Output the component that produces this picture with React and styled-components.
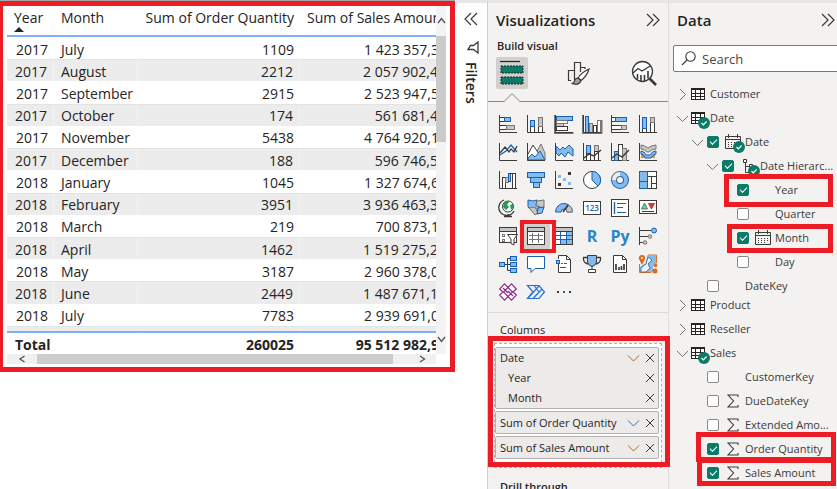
import React from "react";
import styled, { createGlobalStyle, css } from "styled-components";

const RED = "#ed1c24";
const INK = "#252423";
const PANE = "#f3f2f1";
const GREEN = "#0b7a66";
const D = "#3b3a39";
const B = "#1b5fb0";
const LB = "#83bbec";
const G = "#797775";
const LG = "#c8c6c4";

const GlobalStyle = createGlobalStyle`
  *, *::before, *::after { box-sizing: border-box; }
  body { margin: 0; background: #fff; color: ${INK}; font-family: "Open Sans", "Noto Sans", sans-serif; }
  button, input { font: inherit; color: inherit; }
  button { border: 0; padding: 0; background: none; cursor: pointer; }
  ul { list-style: none; margin: 0; padding: 0; }
  h2, h3 { margin: 0; font-weight: 600; }
  svg { display: block; flex: none; }
`;

/* ---------- shell ---------- */

const Page = styled.main`
  display: grid;
  grid-template-columns: minmax(0, 1fr) 32px 182px 168px;
  height: 100vh;
  overflow: hidden;
`;

const Canvas = styled.section`
  border-top: 1px solid #a6a6a6;
`;

const sidePane = css`
  border-top: 3px solid #e6e6e6;
`;

const FiltersPane = styled.aside`
  ${sidePane}
  display: flex;
  flex-direction: column;
  align-items: center;
  padding-top: 9px;
`;

const VizPane = styled.aside`
  ${sidePane}
  position: relative;
  z-index: 1;
  background: ${PANE};
  border-left: 1px solid #d2d0ce;
  border-right: 1px solid #dddbd9;
`;

const DataPane = styled.aside`
  ${sidePane}
  background: ${PANE};
  overflow: hidden;
`;

const Mark = styled.span`
  position: absolute;
  inset: ${(p) => p.$inset};
  border: ${(p) => p.$width || 5}px solid ${RED};
  pointer-events: none;
  z-index: 2;
`;

const PaneHeader = styled.header`
  display: flex;
  align-items: center;
  justify-content: space-between;
  height: 34px;
  padding: 0 8px;
  margin-right: ${(p) => (p.$bleed ? "-6px" : "0")};
`;

const PaneTitle = styled.h2`
  font-size: 15px;
  line-height: 20px;
`;

/* ---------- table visual ---------- */

const Visual = styled.div`
  display: grid;
  grid-template-columns: minmax(0, 1fr) 10px;
  border: 5px solid ${RED};
  border-left-width: 3px;
  padding: 0 4px 3px;
`;

const TableViewport = styled.div`
  overflow: hidden;
`;

const DataTable = styled.table`
  width: 438px;
  height: 348px;
  table-layout: fixed;
  border-spacing: 0;
  font-size: 14px;
  line-height: 19px;
  white-space: nowrap;
`;

const Col = styled.col`
  width: ${(p) => p.$w}px;
`;

const HeadCell = styled.th`
  height: 31px;
  padding: 2px 6px 0 7px;
  vertical-align: top;
  font-weight: 400;
  text-align: ${(p) => (p.$end ? "right" : "left")};
  border-bottom: 2px solid #7fb0f5;
`;

const SortMark = styled.svg`
  width: 10px;
  height: 5px;
`;

const Cell = styled.td`
  padding: 2px 6px 0 7px;
  text-align: ${(p) => (p.$end ? "right" : "left")};
`;

const BodyRow = styled.tr`
  &:nth-child(even) > td {
    padding-top: 1px;
    background: #ececec;
    border-top: 1px solid #e3e3e3;
    border-right: 1px solid #f3f3f3;
  }
`;

const PeekCell = styled.td`
  height: 5px;
  padding: 0;
`;

const TotalCell = styled.td`
  height: 23px;
  padding: 2px 6px 0 8px;
  font-weight: 700;
  text-align: ${(p) => (p.$end ? "right" : "left")};
  border-top: 2px solid #7fb0f5;
`;

const VTrack = styled.div`
  display: flex;
  flex-direction: column;
  align-items: center;
  background: #f3f3f3;
`;

const VThumb = styled.div`
  width: 10px;
  height: 106px;
  margin-bottom: auto;
  background: #cbcbcb;
`;

const HTrack = styled.div`
  display: flex;
  height: 10px;
  background: #f0f0f0;
`;

const HThumb = styled.div`
  flex: 1;
  margin-right: 15px;
  background: #cdcdcd;
`;

const ScrollButton = styled.button`
  display: grid;
  place-items: center;
  width: ${(p) => p.$w}px;
  height: ${(p) => p.$h}px;
`;

const rows = [
  ["2017", "July", "1109", "1 423 357,3"],
  ["2017", "August", "2212", "2 057 902,4"],
  ["2017", "September", "2915", "2 523 947,5"],
  ["2017", "October", "174", "561 681,4"],
  ["2017", "November", "5438", "4 764 920,1"],
  ["2017", "December", "188", "596 746,5"],
  ["2018", "January", "1045", "1 327 674,6"],
  ["2018", "February", "3951", "3 936 463,3"],
  ["2018", "March", "219", "700 873,1"],
  ["2018", "April", "1462", "1 519 275,2"],
  ["2018", "May", "3187", "2 960 378,0"],
  ["2018", "June", "2449", "1 487 671,1"],
  ["2018", "July", "7783", "2 939 691,0"],
];

const arrows = {
  up: "M1 6 L4.5 1.5 L8 6",
  down: "M1 2 L4.5 6.5 L8 2",
  left: "M6.5 1 L2 4 L6.5 7",
  right: "M2 1 L6.5 4 L2 7",
};

function Arrow({ dir }) {
  return (
    <svg width="9" height="8" viewBox="0 0 9 8" fill="none" stroke="#505050" strokeWidth="1.3">
      <path d={arrows[dir]} />
    </svg>
  );
}

function SalesTable() {
  return (
    <Visual>
      <TableViewport>
        <DataTable>
          <colgroup>
            <Col $w={47} />
            <Col $w={84} />
            <Col $w={162} />
            <Col $w={145} />
          </colgroup>
          <thead>
            <tr>
              <HeadCell scope="col">
                Year
                <SortMark viewBox="0 0 10 5" aria-hidden="true">
                  <path d="M0 5 L5 0 L10 5Z" fill={INK} />
                </SortMark>
              </HeadCell>
              <HeadCell scope="col">Month</HeadCell>
              <HeadCell scope="col" $end>Sum of Order Quantity</HeadCell>
              <HeadCell scope="col">Sum of Sales Amount</HeadCell>
            </tr>
          </thead>
          <tbody>
            {rows.map((r, i) => (
              <BodyRow key={i}>
                <Cell $end>{r[0]}</Cell>
                <Cell>{r[1]}</Cell>
                <Cell $end>{r[2]}</Cell>
                <Cell $end>{r[3]}</Cell>
              </BodyRow>
            ))}
            <BodyRow aria-hidden="true">
              <PeekCell />
              <PeekCell />
              <PeekCell />
              <PeekCell />
            </BodyRow>
          </tbody>
          <tfoot>
            <tr>
              <TotalCell colSpan={2}>Total</TotalCell>
              <TotalCell $end>260025</TotalCell>
              <TotalCell $end>95 512 982,9</TotalCell>
            </tr>
          </tfoot>
        </DataTable>
      </TableViewport>
      <VTrack>
        <ScrollButton $w={10} $h={30} aria-label="Scroll up"><Arrow dir="up" /></ScrollButton>
        <VThumb />
        <ScrollButton $w={10} $h={30} aria-label="Scroll down"><Arrow dir="down" /></ScrollButton>
      </VTrack>
      <HTrack>
        <ScrollButton $w={30} $h={10} aria-label="Scroll left"><Arrow dir="left" /></ScrollButton>
        <HThumb />
        <ScrollButton $w={28} $h={10} aria-label="Scroll right"><Arrow dir="right" /></ScrollButton>
      </HTrack>
    </Visual>
  );
}

/* ---------- shared glyphs ---------- */

function DoubleChevron({ left }) {
  return (
    <svg width="14" height="14" viewBox="0 0 14 14" fill="none" stroke={D} strokeWidth="1.2">
      {left ? (
        <path d="M7 1 L1 7 L7 13 M13 1 L7 7 L13 13" />
      ) : (
        <path d="M1 1 L7 7 L1 13 M7 1 L13 7 L7 13" />
      )}
    </svg>
  );
}

const FiltersTitle = styled.h2`
  writing-mode: vertical-rl;
  margin-top: 8px;
  font-size: 14px;
  line-height: 20px;
`;

const FunnelButton = styled.button`
  margin: 15px 0 0 4px;
`;

/* ---------- visual gallery icons (18 x 18) ---------- */

const Axis = () => <path d="M.5 0 V17.5 H18" stroke={D} fill="none" />;
const R = ({ x, y, w, h, f = "#fff", s = D }) => (
  <rect x={x + 0.5} y={y + 0.5} width={w - 1} height={h - 1} fill={f} stroke={s} />
);

const gallery = [
  ["Stacked bar chart", <><Axis /><R x={0} y={2} w={6} h={5} /><R x={5} y={2} w={7} h={5} f={LB} s={B} /><R x={0} y={10} w={8} h={5} /><R x={7} y={10} w={9} h={5} f={LG} s={G} /></>],
  ["Stacked column chart", <><Axis /><R x={3} y={11} w={5} h={7} /><R x={3} y={5} w={5} h={7} f={LB} s={B} /><R x={11} y={11} w={5} h={7} /><R x={11} y={2} w={5} h={10} f={LG} s={G} /></>],
  ["Clustered bar chart", <><path d="M0 0 V18 H18.5" stroke={G} strokeWidth="2" fill="none" /><R x={1} y={1} w={17} h={5} f={LB} s={B} /><R x={1} y={5} w={12} h={4} s={G} /><R x={1} y={8} w={8} h={4} f={LG} s={G} /><R x={1} y={11} w={12} h={5} /><Axis /></>],
  ["Clustered column chart", <><path d="M0 0 V18 H18.5 V5" stroke={G} strokeWidth="2" fill="none" /><R x={2} y={1} w={4} h={17} f={LB} s={B} /><R x={6} y={8} w={4} h={10} f={LG} s={G} /><R x={10} y={10} w={4} h={8} /><R x={14} y={5} w={4} h={13} s={G} /><Axis /></>],
  ["100% stacked bar chart", <><Axis /><R x={0} y={2} w={6} h={5} /><R x={4} y={2} w={12} h={5} f={LB} s={B} /><R x={0} y={10} w={11} h={5} /><R x={10} y={10} w={6} h={5} f={LG} s={G} /></>],
  ["100% stacked column chart", <><Axis /><R x={3} y={12} w={5} h={6} /><R x={3} y={2} w={5} h={12} f={LB} s={B} /><R x={11} y={7} w={5} h={11} /><R x={11} y={2} w={5} h={6} f={LG} s={G} /></>],

  ["Line chart", <><Axis /><path d="M1 12 L4 10 L7 8 L12 2 L18 9" stroke={B} fill="none" strokeWidth="1.3" /><path d="M1 10 L6 4 L10 9 L12 6 L15 9 L18 3" stroke={D} fill="none" strokeWidth="1.3" /></>],
  ["Area chart", <><path d="M10 8 L14 1 L18 10 V17 H8Z" fill={LG} stroke={G} /><path d="M.5 12 L6 2 L12 11 L8 17 H.5Z" fill="#fff" stroke={D} /><path d="M1 15 L5 11 L8 14 L13 8 L18 17 H1Z" fill={LB} stroke={B} /><Axis /></>],
  ["Stacked area chart", <><path d="M1 3 L5 7 L8 4 L10 6 L14 2 L18 6 V13 L13 9 L10 14 L6 10 L4 13 L1 10Z" fill={LB} stroke={B} /><Axis /></>],
  ["Line and stacked column chart", <><Axis /><R x={3} y={2} w={5} h={9} f={LB} s={B} /><R x={3} y={10} w={5} h={8} /><R x={11} y={2} w={5} h={7} f={LG} s={G} /><R x={11} y={8} w={5} h={10} /><path d="M1 15 L6 11 L11 13 L18 7" stroke={D} fill="none" strokeWidth="1.4" /></>],
  ["Line and clustered column chart", <><Axis /><R x={3} y={8} w={5} h={10} f={LB} s={B} /><R x={7} y={1} w={5} h={17} /><R x={11} y={5} w={5} h={13} f={LG} s={G} /><path d="M1 15 L6 11 L11 14 L18 7" stroke={D} fill="none" strokeWidth="1.4" /></>],
  ["Ribbon chart", <><rect x="2" y="11" width="4" height="4" fill="#f08a3c" /><rect x="12" y="11" width="4" height="4" fill="#f08a3c" /><path d="M2 2 Q5 2 9 5 Q13 2 17 2 V6 Q13 6 10 9 H8 Q5 6 2 6Z" fill={LG} stroke={G} /><path d="M2 8 Q5 8 7 12 H11 Q13 8 17 8 V11 Q14 11 12 15 H6 Q5 11 2 11Z" fill={LB} stroke={B} /><Axis /></>],

  ["Waterfall chart", <><Axis /><R x={3} y={6} w={4} h={12} /><R x={6} y={6} w={4} h={6} f={LG} s={G} /><R x={9} y={2} w={3} h={9} f={LB} s={B} /><R x={13} y={2} w={4} h={16} /><path d="M10 2.5 H14" stroke={D} /></>],
  ["Funnel chart", <><R x={0} y={1} w={18} h={6} f={LB} s={B} /><R x={3} y={6} w={12} h={6} f={LB} s={B} /><R x={6} y={11} w={7} h={6} f={LB} s={B} /></>],
  ["Scatter chart", <><Axis /><rect x="13" y="1" width="3" height="3" fill={D} /><rect x="3" y="4" width="3" height="3" fill={LB} /><rect x="8" y="7" width="3" height="3" fill={LB} /><rect x="13" y="11" width="3" height="3" fill={LB} /><rect x="3" y="12" width="3" height="3" fill={D} /></>],
  ["Pie chart", <><circle cx="9" cy="9" r="8.5" fill="#fff" stroke={D} /><path d="M9 .5 A8.5 8.5 0 0 1 15 15 L9 9Z" fill={LB} stroke={B} /></>],
  ["Donut chart", <><circle cx="9" cy="9" r="6" fill="none" stroke={B} strokeWidth="6" /><circle cx="9" cy="9" r="6" fill="none" stroke={LB} strokeWidth="4" /><path d="M9 3 A6 6 0 0 0 3 9" fill="none" stroke={G} strokeWidth="6" /><path d="M9 3 A6 6 0 0 0 3 9" fill="none" stroke="#eee" strokeWidth="4" /></>],
  ["Treemap", <><R x={8} y={0} w={10} h={6} /><R x={8} y={5} w={5} h={13} /><R x={12} y={5} w={6} h={8} /><R x={12} y={12} w={6} h={6} /><R x={0} y={0} w={9} h={11} f={LB} s={B} /><R x={0} y={10} w={9} h={8} f={LB} s={B} /></>],

  ["Map", <><circle cx="9" cy="7.5" r="5.5" fill="#fff" stroke={D} /><path d="M5 4 Q8 1 10 3 L8 6 L10 8 L7 11 L4 8Z M11 6 L14 5 V9 L12 11Z" fill="#1f9d55" /><path d="M5 1 A8 8 0 1 0 15 12 M9 15 V17 M5 17.5 H13" fill="none" stroke={D} strokeWidth="1.3" /></>],
  ["Filled map", <><path d="M1 1 L6 2 L10 1 L9 6 L12 8 L9 14 L5 12 L1 8Z" fill={LB} stroke={B} /><path d="M10 2 L17 1 L17 8 L14 9 L12 7 L9 7Z M2 9 L8 8 L11 14 L8 16Z" fill={LG} stroke={G} /><path d="M11 9 L17 8 L15 14 L10 15Z" fill={LB} stroke={B} /></>],
  ["Gauge", <><path d="M.5 13 A8.5 8.5 0 0 1 17.5 13 H12 A3 3 0 0 0 6 13Z" fill={LB} stroke={B} /><path d="M14 6 A8.5 8.5 0 0 1 17.5 13 H12 L11 10Z" fill={LG} stroke={G} /><path d="M8 13 L13 6" stroke={D} strokeWidth="1.5" /></>],
  ["Card", <><R x={0} y={2} w={18} h={14} /><text x="9" y="12" fontSize="8" fontWeight="600" textAnchor="middle" fill={B}>123</text></>],
  ["Multi-row card", <><R x={0} y={0} w={18} h={18} /><path d="M3.5 3 V15" stroke={B} strokeWidth="1.4" /><path d="M6 4.5 H15 M6 8.5 H12 M6 13.5 H15" stroke={B} /></>],
  ["KPI", <><R x={0} y={1} w={18} h={14} /><path d="M2.5 10 L5.5 4 L8.5 10Z" fill="#7cc9a0" stroke="#1b7a47" strokeWidth=".8" /><path d="M9.5 4.5 L12.5 10 L15.5 4.5Z" fill="#e8353b" stroke="#b51c22" strokeWidth=".8" /><path d="M3 12.5 H15" stroke={D} /></>],

  ["Slicer", <><R x={0} y={0} w={18} h={16} /><rect x="1" y="1" width="16" height="3" fill={LG} /><path d="M.5 4.5 H17.5" stroke={D} /><R x={3} y={7} w={3} h={3} s={G} /><R x={3} y={12} w={3} h={3} s={G} /><path d="M8.5 7.5 H18.5 L15 12 V18 L12 16.5 V12Z" fill="#fff" stroke={D} /></>],
  ["Table", <><R x={0} y={0} w={18} h={18} /><rect x="1" y="1" width="16" height="3" fill={LG} /><path d="M2 8.5 H16 M2 12.5 H16 M5.5 6 V16 M11.5 6 V16" stroke={G} /><path d="M0 4.5 H18" stroke={D} /></>],
  ["Matrix", <><R x={0} y={0} w={18} h={18} /><rect x="1" y="1" width="16" height="3" fill={LG} /><rect x="12" y="5" width="5" height="12" fill={LB} /><rect x="6" y="13" width="6" height="4" fill={LB} /><path d="M1 8.5 H17 M1 12.5 H17 M5.5 5 V17 M11.5 5 V17" stroke={B} /><path d="M0 4.5 H18 M.5 4 V17" stroke={D} /></>],
  ["R script visual", <text x="9" y="15" fontSize="16" fontWeight="700" textAnchor="middle" fill="#2b84c6">R</text>],
  ["Python visual", <text x="9" y="15" fontSize="16" fontWeight="700" textAnchor="middle" fill="#2b84c6">Py</text>],
  ["Key influencers", <><path d="M.5 0 V18 M1 3.5 H12 M1 9.5 H9 M1 15.5 H4" stroke={D} /><circle cx="15" cy="3.5" r="2.5" fill={LB} stroke={B} /><circle cx="11" cy="9.5" r="1.8" fill={LG} stroke={G} /><circle cx="6" cy="15.5" r="1.8" fill={LG} stroke={G} /></>],

  ["Decomposition tree", <><path d="M5 9.5 H12 M8.5 3.5 V15.5 M8.5 3.5 H12 M8.5 15.5 H12" stroke={D} fill="none" /><R x={0} y={7} w={6} h={5} f={LB} s={B} /><R x={11} y={1} w={7} h={5} f={LB} s={B} /><R x={11} y={7} w={7} h={5} f={LB} s={B} /><R x={11} y={13} w={7} h={5} f={LB} s={B} /></>],
  ["Q&A", <path d="M.5 1.5 H17.5 V13.5 H8 L4 17.5 V13.5 H.5Z" fill="#fff" stroke={B} />],
  ["Smart narrative", <><path d="M3.5 4 V.5 H11.5 L15.5 4.5 V17.5 H3.5 V9" fill="#fff" stroke={D} /><path d="M11.5 .5 V4.5 H15.5" fill="none" stroke={D} /><R x={1} y={5} w={4} h={4} f={LB} s={B} /><path d="M6 8.5 H8 M9 8.5 H12 M5 12.5 H11" stroke={B} strokeWidth="1.2" /></>],
  ["Metrics", <><path d="M4 2.5 H.5 Q0 8 5 9 M14 2.5 H17.5 Q18 8 13 9" fill="none" stroke={D} strokeWidth="1.3" /><path d="M4.5 .5 H13.5 V7 Q13 10.5 9 11.5 Q5 10.5 4.5 7Z" fill={LB} stroke={D} /><path d="M9 11 V14 M5.5 17.5 V14.5 H12.5 V17.5Z" fill="#fff" stroke={D} /></>],
  ["Paginated report", <><path d="M2.5 .5 H11.5 L15.5 4.5 V17.5 H2.5Z" fill="#fff" stroke={D} /><path d="M11.5 .5 V4.5 H15.5" fill="none" stroke={D} /><path d="M5 15 V9 M8 15 V12 M10.5 15 V11 M13 15 V9" stroke={D} strokeWidth="1.7" /></>],
  ["ArcGIS Maps", <><path d="M8 .5 H17.5 V9 L14 11 L15 17.5 H.5 V12 L7 8Z" fill={LB} /><path d="M9 0 H17.5 V8 M.5 9 V17.5 H12" fill="none" stroke="#d9702b" /><path d="M9 2 L13 5 L9 9 L11 13 L7 17 H2 V13 L7 9Z" fill="#f3f2f1" stroke={B} strokeWidth=".8" /><path d="M3 0 A3 3 0 0 1 6 4 L3 10 L0 4 A3 3 0 0 1 3 0Z" fill="#e0671c" /><circle cx="3" cy="3" r="1" fill="#fff" /><circle cx="16.5" cy="10.5" r="1.8" fill="#e0671c" /><circle cx="16" cy="16" r="2.5" fill="#e0671c" /></>],

  ["Power Apps", <><path d="M5.5 .8 L9 4.5 L12.5 .8 L17.3 6 L14 9 L17.3 12 L12.5 17.2 L9 13.5 L5.5 17.2 L.7 12 L4 9 L.7 6Z" fill="#fff" stroke="#8e2a8b" strokeWidth="1.2" /><path d="M9 4.5 L13.5 9 L9 13.5 L4.5 9Z M4 5 L9 10 M14 13 L9 8" fill="none" stroke="#8e2a8b" strokeWidth="1.2" /></>],
  ["Power Automate", <><path d="M.5 2.5 H12 L17.5 9 L12 15.5 H.5 L6 9Z" fill="#e8f1fb" stroke="#2b6fd0" strokeWidth="1.2" /><path d="M7 2.5 L12 9 M1 15 L12 3 M6 15.5 L15 6" fill="none" stroke="#2b6fd0" strokeWidth="1.2" /></>],
  ["More visuals", <><rect x="2" y="8" width="2" height="2" fill={D} /><rect x="8" y="8" width="2" height="2" fill={B} /><rect x="14" y="8" width="2" height="2" fill={D} /></>],
];

const SubTitle = styled.h3`
  padding: 0 9px;
  font-size: 11px;
  line-height: 18px;
`;

const Tabs = styled.div`
  display: flex;
  justify-content: space-between;
  margin: 2px 8px 0;
`;

const Tab = styled.button`
  display: grid;
  place-items: center;
  width: 32px;
  height: 32px;
  border-radius: 2px;
  background: ${(p) => (p.$active ? "#d2d0ce" : "transparent")};
`;

const TabRule = styled.div`
  position: relative;
  height: 13px;
  border-bottom: 1px solid #8a8886;
`;

const Caret = styled.svg`
  position: absolute;
  left: 16px;
  bottom: -1px;
`;

const Gallery = styled.div`
  display: grid;
  grid-template-columns: repeat(6, 28px);
  grid-auto-rows: 28px;
  margin: 8px 6px 6px;
`;

const GalleryButton = styled.button`
  position: relative;
  display: grid;
  place-items: center;
  background: ${(p) => (p.$active ? "#d2d0ce" : "transparent")};
`;

const VisualIcon = styled.svg`
  width: 18px;
  height: 18px;
  overflow: visible;
`;

const Wells = styled.section`
  padding: 9px 6px 0;
  border-top: 1px solid #dddbd9;
`;

const WellTitle = styled.h3`
  padding: 0 6px;
  font-size: 11px;
  line-height: 16px;
  font-weight: ${(p) => (p.$strong ? 600 : 400)};
`;

const DropArea = styled.div`
  position: relative;
  display: flex;
  flex-direction: column;
  gap: 2px;
  margin: 5px 0 11px;
  padding: 3px 2px 8px 0;
  border: 1px dashed #b3b0ad;
  background: #fff;
`;

const Chip = styled.div`
  border: 1px solid #b3b0ad;
  border-radius: 2px;
  background: #edebe9;
`;

const ChipRow = styled.div`
  display: flex;
  align-items: center;
  gap: 4px;
  height: ${(p) => (p.$single ? 21 : 20)}px;
  padding: 0 2px 0 ${(p) => (p.$nested ? 12 : 4)}px;
  font-size: 11px;
  line-height: 16px;
  white-space: nowrap;
`;

const ChipLabel = styled.span`
  flex: 1;
`;

function ChipItem({ label, nested, single, menu, tint }) {
  return (
    <ChipRow $nested={nested} $single={single}>
      <ChipLabel>{label}</ChipLabel>
      {menu && (
        <button aria-label={`${label} options`}>
          <svg width="13" height="12" viewBox="0 0 13 12" fill="none" stroke={tint}>
            <path d="M1 3.5 L6.5 9 L12 3.5" />
          </svg>
        </button>
      )}
      <button aria-label={`Remove ${label}`}>
        <svg width="12" height="12" viewBox="0 0 12 12" fill="none" stroke={D}>
          <path d="M2 2 L10 10 M10 2 L2 10" />
        </svg>
      </button>
    </ChipRow>
  );
}

function Visualizations() {
  return (
    <VizPane>
      <PaneHeader>
        <PaneTitle>Visualizations</PaneTitle>
        <button aria-label="Collapse visualizations"><DoubleChevron /></button>
      </PaneHeader>
      <SubTitle>Build visual</SubTitle>
      <Tabs>
        <Tab $active aria-label="Build visual">
          <svg width="24" height="26" viewBox="0 0 24 26">
            <path d="M0 1.5 H20" stroke={INK} strokeWidth="1.2" />
            <rect x="1" y="6" width="22" height="7" fill={GREEN} stroke={INK} strokeDasharray="2 1" />
            <rect x="1" y="17" width="22" height="7" fill={GREEN} stroke={INK} strokeDasharray="2 1" />
          </svg>
        </Tab>
        <Tab aria-label="Format visual">
          <svg width="24" height="26" viewBox="0 0 24 26" fill="none" stroke={D} strokeWidth="1.2">
            <path d="M5 20.5 H2.5 V10.5 H8.5 V20 M8.5 10.5 V2.5 H14.5 V12 M14.5 7.5 H19 V9" />
            <path d="M23 9 Q16 12 12 18 L15 20.5 Q21 16 23 9Z" fill="#fff" />
            <path d="M12 18 Q9 18 8.5 21 Q8 23.5 5.5 23.5 Q13 26 15 20.5Z" fill="#a19f9d" />
          </svg>
        </Tab>
        <Tab aria-label="Analytics">
          <svg width="26" height="26" viewBox="0 0 26 26" fill="none" stroke={D} strokeWidth="1.3">
            <circle cx="11.5" cy="11.5" r="10" fill="#fff" />
            <path d="M2 13 L7 8.5 L11 11 L20 5.5" />
            <path d="M6.5 19 V14 M10 21 V15 M13.5 21 V15 M17 18.5 V11" strokeWidth="1.6" />
            <path d="M18.5 18.5 L25 25" strokeWidth="2.6" />
          </svg>
        </Tab>
      </Tabs>
      <TabRule>
        <Caret width="16" height="9" viewBox="0 0 16 9" aria-hidden="true">
          <path d="M0 8.5 L8 .7 L16 8.5 V9 H0Z" fill={PANE} />
          <path d="M0 8.5 L8 .7 L16 8.5" fill="none" stroke="#8a8886" />
        </Caret>
      </TabRule>
      <Gallery>
        {gallery.map(([name, art]) => (
          <GalleryButton key={name} aria-label={name} $active={name === "Table"}>
            <VisualIcon viewBox="0 0 18 18">{art}</VisualIcon>
            {name === "Table" && <Mark $inset="-2px -6px -3px -2px" $width={4} />}
          </GalleryButton>
        ))}
      </Gallery>
      <Wells>
        <WellTitle>Columns</WellTitle>
        <DropArea>
          <Chip>
            <ChipItem label="Date" menu tint="#b5651d" />
            <ChipItem label="Year" nested />
            <ChipItem label="Month" nested />
          </Chip>
          <Chip><ChipItem label="Sum of Order Quantity" single menu tint="#2f6fb5" /></Chip>
          <Chip><ChipItem label="Sum of Sales Amount" single menu tint="#b5651d" /></Chip>
          <Mark $inset="-8px -9px 0 -7px" />
        </DropArea>
        <WellTitle $strong>Drill through</WellTitle>
      </Wells>
    </VizPane>
  );
}

/* ---------- data pane ---------- */

const SearchBox = styled.label`
  display: flex;
  align-items: center;
  gap: 6px;
  height: 27px;
  margin: 8px -6px 10px 4px;
  padding-left: 7px;
  border: 1px solid #7a7876;
  border-radius: 2px;
  background: #fff;
`;

const SearchInput = styled.input`
  width: 100%;
  min-width: 0;
  padding: 0;
  border: 0;
  outline: 0;
  background: none;
  font-size: 13px;
  line-height: 20px;
  &::placeholder { color: #4a4846; opacity: 1; }
`;

const Group = styled.li`
  margin-top: ${(p) => (p.$tight ? "-5px" : "0")};
`;

const TreeRow = styled.div`
  position: relative;
  display: flex;
  align-items: center;
  height: 24px;
  padding-left: ${(p) => 6 + p.$level * 15}px;
  font-size: 11px;
  line-height: 16px;
  white-space: nowrap;
  color: #3b3a39;
`;

const Twisty = styled.span`
  display: grid;
  place-items: center;
  width: 15px;
`;

const FieldLabel = styled.label`
  display: flex;
  align-items: center;
`;

const Check = styled.input`
  appearance: none;
  display: grid;
  place-items: center;
  width: 12px;
  height: 12px;
  margin: 0 6px 0 2px;
  border: 1px solid #8a8886;
  border-radius: 2px;
  background: #fff;
  &:checked {
    border-color: ${GREEN};
    background: ${GREEN};
  }
  &:checked::before {
    content: "";
    width: 7px;
    height: 4px;
    margin-bottom: 2px;
    border: solid #fff;
    border-width: 0 0 1px 1px;
    transform: rotate(-45deg);
  }
`;

const IconSlot = styled.span`
  position: relative;
  display: grid;
  place-items: center;
  width: 16px;
  height: 16px;
  margin-right: 4px;
`;

const Badge = styled.svg`
  position: absolute;
  left: 8px;
  top: 7px;
`;

const fieldIcons = {
  table: (
    <svg width="14" height="12" viewBox="0 0 14 12" fill="none" stroke={INK}>
      <rect x=".5" y=".5" width="13" height="11" fill="#fff" />
      <path d="M0 1 H14" strokeWidth="2" />
      <path d="M0 5.5 H14 M0 8.5 H14 M4.5 1 V12 M9.5 1 V12" />
    </svg>
  ),
  calendar: (
    <svg width="16" height="16" viewBox="0 0 16 16" fill="none" stroke={D}>
      <path d="M.5 2.5 H15.5 V14.5 H.5Z M0 5.5 H16 M3.5 0 V4 M12.5 0 V4" />
      <path d="M3 8.5 H14 M3 10.5 H14 M3 12.5 H11" strokeDasharray="1 2" />
    </svg>
  ),
  hierarchy: (
    <svg width="12" height="16" viewBox="0 0 12 16" fill="none" stroke={D}>
      <path d="M1.5 1.5 H4.5 V4.5 H1.5Z M3.5 5 V14.5 H7 M3.5 8.5 H7 M7.5 6.5 H10.5 V9.5 H7.5Z M7.5 12.5 H10.5 V15.5 H7.5Z" />
    </svg>
  ),
  sigma: (
    <svg width="12" height="14" viewBox="0 0 12 14" fill="none" stroke={D} strokeWidth="1.1">
      <path d="M11 3 V1 H1 L6.5 7 L1 13 H11 V11" />
    </svg>
  ),
};

const tree = [
  { label: "Customer", fields: [] },
  {
    label: "Date",
    open: true,
    fields: [
      { label: "Date", level: 1, icon: "calendar", on: true, open: true, badge: true },
      { label: "Date Hierarc...", level: 2, icon: "hierarchy", on: true, open: true, badge: true },
      { label: "Year", level: 3, on: true, mark: "-4px 4px -5px 55px" },
      { label: "Quarter", level: 3 },
      { label: "Month", level: 3, icon: "calendar", on: true, mark: "-2px 4px -3px 58px" },
      { label: "Day", level: 3 },
      { label: "DateKey", level: 1 },
    ],
  },
  { label: "Product", tight: true, fields: [] },
  { label: "Reseller", fields: [] },
  {
    label: "Sales",
    open: true,
    fields: [
      { label: "CustomerKey", level: 1 },
      { label: "DueDateKey", level: 1, icon: "sigma" },
      { label: "Extended Amo...", level: 1, icon: "sigma" },
      { label: "Order Quantity", level: 1, icon: "sigma", on: true, mark: "-5px 1px -1px 27px" },
      { label: "Sales Amount", level: 1, icon: "sigma", on: true, mark: "-3px 1px -1px 28px" },
    ],
  },
];

function Chevron({ open }) {
  return (
    <svg width="13" height="13" viewBox="0 0 13 13" fill="none" stroke="#797775">
      <path d={open ? "M1 4 L6.5 9.5 L12 4" : "M4 1 L9.5 6.5 L4 12"} />
    </svg>
  );
}

function CheckBadge() {
  return (
    <Badge width="12" height="12" viewBox="0 0 12 12" aria-hidden="true">
      <circle cx="6" cy="6" r="6" fill={GREEN} />
      <path d="M3.5 6 L5.3 7.8 L8.6 4.5" fill="none" stroke="#fff" strokeWidth="1.2" />
    </Badge>
  );
}

function Field({ field }) {
  return (
    <TreeRow $level={field.level}>
      <Twisty>
        {field.open && <button aria-label={`Collapse ${field.label}`}><Chevron open /></button>}
      </Twisty>
      <FieldLabel>
        <Check type="checkbox" defaultChecked={field.on} />
        <IconSlot>
          {fieldIcons[field.icon]}
          {field.badge && <CheckBadge />}
        </IconSlot>
        {field.label}
      </FieldLabel>
      {field.mark && <Mark $inset={field.mark} />}
    </TreeRow>
  );
}

function Data() {
  return (
    <DataPane>
      <PaneHeader $bleed>
        <PaneTitle>Data</PaneTitle>
        <button aria-label="Collapse data"><DoubleChevron /></button>
      </PaneHeader>
      <SearchBox>
        <svg width="15" height="15" viewBox="0 0 15 15" fill="none" stroke={D} strokeWidth="1.1">
          <circle cx="9.5" cy="5.5" r="4.7" />
          <path d="M6 9 L1 14" />
        </svg>
        <SearchInput type="search" placeholder="Search" aria-label="Search" />
      </SearchBox>
      <ul>
        {tree.map((t) => (
          <Group key={t.label} $tight={t.tight}>
            <TreeRow $level={0}>
              <Twisty>
                <button aria-label={`Toggle ${t.label}`}><Chevron open={t.open} /></button>
              </Twisty>
              <IconSlot>
                {fieldIcons.table}
                {t.open && <CheckBadge />}
              </IconSlot>
              <span>{t.label}</span>
            </TreeRow>
            {t.fields.map((f) => <Field key={f.label} field={f} />)}
          </Group>
        ))}
      </ul>
    </DataPane>
  );
}

export default function App() {
  return (
    <Page>
      <GlobalStyle />
      <Canvas>
        <SalesTable />
      </Canvas>
      <FiltersPane>
        <button aria-label="Expand filters"><DoubleChevron left /></button>
        <FunnelButton aria-label="Filters">
          <svg width="12" height="13" viewBox="0 0 12 13" fill="none" stroke={D} strokeWidth="1.3">
            <path d="M11 1 V12 L6.5 8.5 H1 L3.5 4.5 H6.5Z" />
          </svg>
        </FunnelButton>
        <FiltersTitle>Filters</FiltersTitle>
      </FiltersPane>
      <Visualizations />
      <Data />
    </Page>
  );
}
